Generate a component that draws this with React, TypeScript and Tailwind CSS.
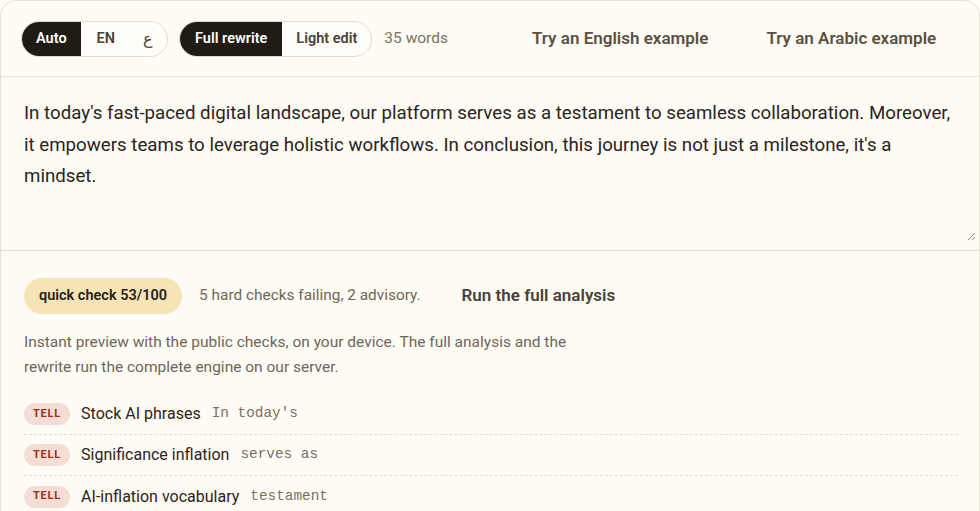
import React from "react"

const checks = [
  { label: "Stock AI phrases", match: "In today's" },
  { label: "Significance inflation", match: "serves as" },
  { label: "AI-inflation vocabulary", match: "testament" },
]

const sans = "font-['Roboto','Liberation_Sans',sans-serif]"
const mono = "font-['Liberation_Mono','DejaVu_Sans_Mono',monospace]"

export default function App() {
  return (
    <div className={`h-[511px] w-[980px] overflow-hidden bg-[#fffdf6] ${sans}`}>
      <div className="h-[560px] w-[980px] rounded-2xl border border-[#e7e1d4] bg-[#fffcf5]">
        {/* toolbar */}
        <div className="flex h-[76px] items-center border-b border-[#e7e1d4] pl-[20px]">
          <div className="flex h-[36px] items-center rounded-full border border-[#e2dccd] bg-[#fffdf7] text-[14.5px]">
            <button className="h-full rounded-l-full bg-[#211b15] px-[14px] font-semibold text-white">Auto</button>
            <button className="h-full px-[16px] font-semibold text-[#4a4236]">EN</button>
            <button className="h-full pl-[12px] pr-[14px] text-[16px] text-[#4a4236]">ع</button>
          </div>
          <div className="ml-[11px] flex h-[36px] items-center rounded-full border border-[#e2dccd] bg-[#fffdf7] text-[14.5px]">
            <button className="h-full rounded-l-full bg-[#211b15] px-[15px] font-semibold text-white">Full rewrite</button>
            <button className="h-full px-[14px] font-semibold text-[#4a4236]">Light edit</button>
          </div>
          <span className="ml-[12px] text-[15.5px] text-[#7a7062]">35 words</span>
          <button className="ml-[84px] text-[17px] font-semibold text-[#5a5142]">Try an English example</button>
          <button className="ml-[58px] text-[17px] font-semibold text-[#5a5142]">Try an Arabic example</button>
        </div>

        {/* textarea */}
        <div className="relative h-[174px] border-b border-[#e2dccd] px-[23px] pt-[21px]">
          <p className="text-[18.7px] leading-[31.5px] text-[#2a241d]">
            In today's fast-paced digital landscape, our platform serves as a testament to seamless collaboration. Moreover, it empowers teams to leverage holistic workflows. In conclusion, this journey is not just a milestone, it's a mindset.
          </p>
          <svg className="absolute bottom-[9px] right-[3px]" width="10" height="10" viewBox="0 0 10 10">
            <path d="M9 2 L2 9 M9 6 L6 9" stroke="#8a8378" strokeWidth="1" />
          </svg>
        </div>

        {/* quick check */}
        <div className="px-[23px] pt-[27px]">
          <div className="flex items-center">
            <span className="flex h-[36px] items-center rounded-full bg-[#f6e4b6] px-[15px] text-[14.5px] font-semibold text-[#2a2118]">
              quick check 53/100
            </span>
            <span className="ml-[17px] text-[15.4px] text-[#6f6657]">5 hard checks failing, 2 advisory.</span>
            <button className="ml-[41px] text-[17px] font-semibold text-[#4a4236]">Run the full analysis</button>
          </div>
          <p className="mt-[16px] max-w-[570px] text-[15.5px] leading-[25px] text-[#6f6657]">
            Instant preview with the public checks, on your device. The full analysis and the rewrite run the complete engine on our server.
          </p>
          <ul className="mt-[14px] w-[934px]">
            {checks.map((c, i) => (
              <li
                key={c.label}
                className={`flex h-[41px] items-center ${i < checks.length - 1 ? "border-b border-dashed border-[#e4ded2]" : ""}`}
              >
                <span className="flex h-[22px] items-center rounded-full bg-[#f5ddd6] px-[9px] text-[11px] font-bold tracking-[0.8px] text-[#9c2e22]">
                  TELL
                </span>
                <span className="ml-[11px] text-[16px] text-[#2a241d]">{c.label}</span>
                <span className={`ml-[11px] text-[14.4px] text-[#7a7062] ${mono}`}>{c.match}</span>
              </li>
            ))}
          </ul>
        </div>
      </div>
    </div>
  )
}
